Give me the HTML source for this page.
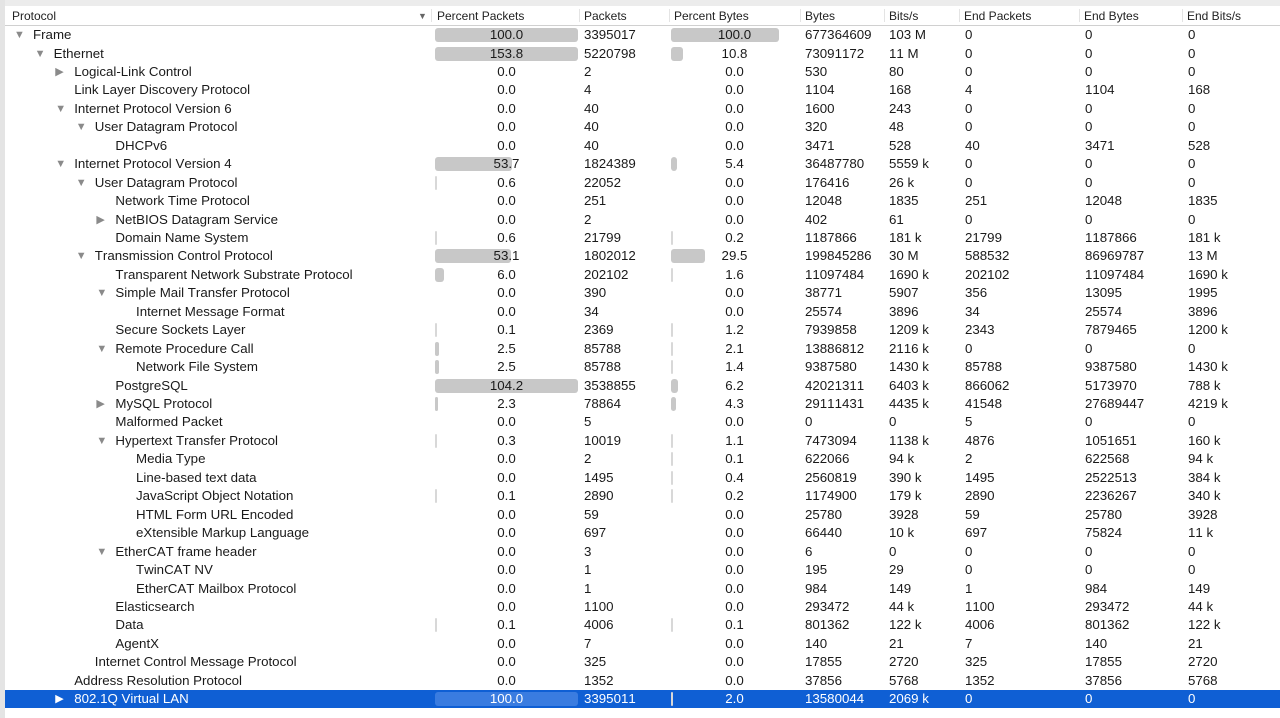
<!DOCTYPE html><html><head><meta charset="utf-8"><style>
body{margin:0;width:1280px;height:718px;background:#fff;font-family:"Liberation Sans",Arial,sans-serif;font-size:13.3px;color:#1a1a1a;overflow:hidden;position:relative}
.top{position:absolute;left:0;top:0;width:1280px;height:6px;background:#ececec}
.lb{position:absolute;left:0;top:0;width:5px;height:718px;background:#e4e4e4}
.hdr{position:absolute;left:5px;top:6px;width:1275px;height:19px;background:#fff;border-bottom:1px solid #d0d0d0;font-size:12px;color:#222}
.hdr span{position:absolute;top:3px}
.hdr i{position:absolute;top:3px;width:1px;height:13px;background:#e4e4e4}
.r{position:absolute;left:5px;width:1275px;height:18px;line-height:18px}
.r span{position:absolute;top:0;white-space:nowrap}
.c{text-align:center}
.bar{position:absolute;top:2px;height:14px;background:#c8c8c8;border-radius:3px}
.t{position:absolute;font-size:11px;color:#8a8a8a;top:0}
.sel{background:#0f5fd4;color:#fff}
.sel .bar{background:#3a7ce0}
</style></head><body>
<div class="top"></div><div class="lb"></div>
<div class="hdr">
<span style="left:7px">Protocol</span><span style="left:413px;font-size:9px;color:#666;top:5px">▼</span>
<i style="left:426px"></i><span style="left:432px">Percent Packets</span>
<i style="left:574px"></i><span style="left:579px">Packets</span>
<i style="left:664px"></i><span style="left:669px">Percent Bytes</span>
<i style="left:795px"></i><span style="left:800px">Bytes</span>
<i style="left:879px"></i><span style="left:884px">Bits/s</span>
<i style="left:954px"></i><span style="left:959px">End Packets</span>
<i style="left:1074px"></i><span style="left:1079px">End Bytes</span>
<i style="left:1177px"></i><span style="left:1182px">End Bits/s</span>
</div>
<div id="rows"></div>
<script>
var D=[
[0,1,"Frame","100.0","3395017","100.0","677364609","103 M","0","0","0"],
[1,1,"Ethernet","153.8","5220798","10.8","73091172","11 M","0","0","0"],
[2,2,"Logical-Link Control","0.0","2","0.0","530","80","0","0","0"],
[2,0,"Link Layer Discovery Protocol","0.0","4","0.0","1104","168","4","1104","168"],
[2,1,"Internet Protocol Version 6","0.0","40","0.0","1600","243","0","0","0"],
[3,1,"User Datagram Protocol","0.0","40","0.0","320","48","0","0","0"],
[4,0,"DHCPv6","0.0","40","0.0","3471","528","40","3471","528"],
[2,1,"Internet Protocol Version 4","53.7","1824389","5.4","36487780","5559 k","0","0","0"],
[3,1,"User Datagram Protocol","0.6","22052","0.0","176416","26 k","0","0","0"],
[4,0,"Network Time Protocol","0.0","251","0.0","12048","1835","251","12048","1835"],
[4,2,"NetBIOS Datagram Service","0.0","2","0.0","402","61","0","0","0"],
[4,0,"Domain Name System","0.6","21799","0.2","1187866","181 k","21799","1187866","181 k"],
[3,1,"Transmission Control Protocol","53.1","1802012","29.5","199845286","30 M","588532","86969787","13 M"],
[4,0,"Transparent Network Substrate Protocol","6.0","202102","1.6","11097484","1690 k","202102","11097484","1690 k"],
[4,1,"Simple Mail Transfer Protocol","0.0","390","0.0","38771","5907","356","13095","1995"],
[5,0,"Internet Message Format","0.0","34","0.0","25574","3896","34","25574","3896"],
[4,0,"Secure Sockets Layer","0.1","2369","1.2","7939858","1209 k","2343","7879465","1200 k"],
[4,1,"Remote Procedure Call","2.5","85788","2.1","13886812","2116 k","0","0","0"],
[5,0,"Network File System","2.5","85788","1.4","9387580","1430 k","85788","9387580","1430 k"],
[4,0,"PostgreSQL","104.2","3538855","6.2","42021311","6403 k","866062","5173970","788 k"],
[4,2,"MySQL Protocol","2.3","78864","4.3","29111431","4435 k","41548","27689447","4219 k"],
[4,0,"Malformed Packet","0.0","5","0.0","0","0","5","0","0"],
[4,1,"Hypertext Transfer Protocol","0.3","10019","1.1","7473094","1138 k","4876","1051651","160 k"],
[5,0,"Media Type","0.0","2","0.1","622066","94 k","2","622568","94 k"],
[5,0,"Line-based text data","0.0","1495","0.4","2560819","390 k","1495","2522513","384 k"],
[5,0,"JavaScript Object Notation","0.1","2890","0.2","1174900","179 k","2890","2236267","340 k"],
[5,0,"HTML Form URL Encoded","0.0","59","0.0","25780","3928","59","25780","3928"],
[5,0,"eXtensible Markup Language","0.0","697","0.0","66440","10 k","697","75824","11 k"],
[4,1,"EtherCAT frame header","0.0","3","0.0","6","0","0","0","0"],
[5,0,"TwinCAT NV","0.0","1","0.0","195","29","0","0","0"],
[5,0,"EtherCAT Mailbox Protocol","0.0","1","0.0","984","149","1","984","149"],
[4,0,"Elasticsearch","0.0","1100","0.0","293472","44 k","1100","293472","44 k"],
[4,0,"Data","0.1","4006","0.1","801362","122 k","4006","801362","122 k"],
[4,0,"AgentX","0.0","7","0.0","140","21","7","140","21"],
[3,0,"Internet Control Message Protocol","0.0","325","0.0","17855","2720","325","17855","2720"],
[2,0,"Address Resolution Protocol","0.0","1352","0.0","37856","5768","1352","37856","5768"],
[2,2,"802.1Q Virtual LAN","100.0","3395011","2.0","13580044","2069 k","0","0","0"]];
var h="";
D.forEach(function(d,i){
 var top=(26+i*18.45).toFixed(1),sel=i==D.length-1;
 var x=28+d[0]*20.6;
 var pp=parseFloat(d[3]),pb=parseFloat(d[5]);
 var w1=pp>0?Math.max(2,Math.min(143,pp*1.43)):0, w2=pb>0?Math.max(2,Math.min(108,pb*1.15)):0;
 var tri=d[1]==1?"▼":d[1]==2?"▶":"";
 h+='<div class="r'+(sel?' sel':'')+'" style="top:'+top+'px">';
 if(tri)h+='<span class="t" style="left:'+(x-19)+'px;'+(sel?'color:#fff':'')+'">'+tri+'</span>';
 h+='<span style="left:'+x+'px">'+d[2]+'</span>';
 if(w1)h+='<div class="bar" style="left:430px;width:'+w1+'px;'+(w1<3?'background:#d8d8d8;':'')+'"></div>';
 h+='<span class="c" style="left:430px;width:143px">'+d[3]+'</span>';
 h+='<span style="left:579px">'+d[4]+'</span>';
 if(w2)h+='<div class="bar" style="left:666px;width:'+w2+'px;'+(w2<3?'background:#d8d8d8;':'')+'"></div>';
 h+='<span class="c" style="left:666px;width:127px">'+d[5]+'</span>';
 h+='<span style="left:800px">'+d[6]+'</span><span style="left:884px">'+d[7]+'</span><span style="left:960px">'+d[8]+'</span><span style="left:1080px">'+d[9]+'</span><span style="left:1183px">'+d[10]+'</span></div>';
});
document.getElementById("rows").innerHTML=h;
</script>
<style>body{font-kerning:none}</style>
</body></html>
